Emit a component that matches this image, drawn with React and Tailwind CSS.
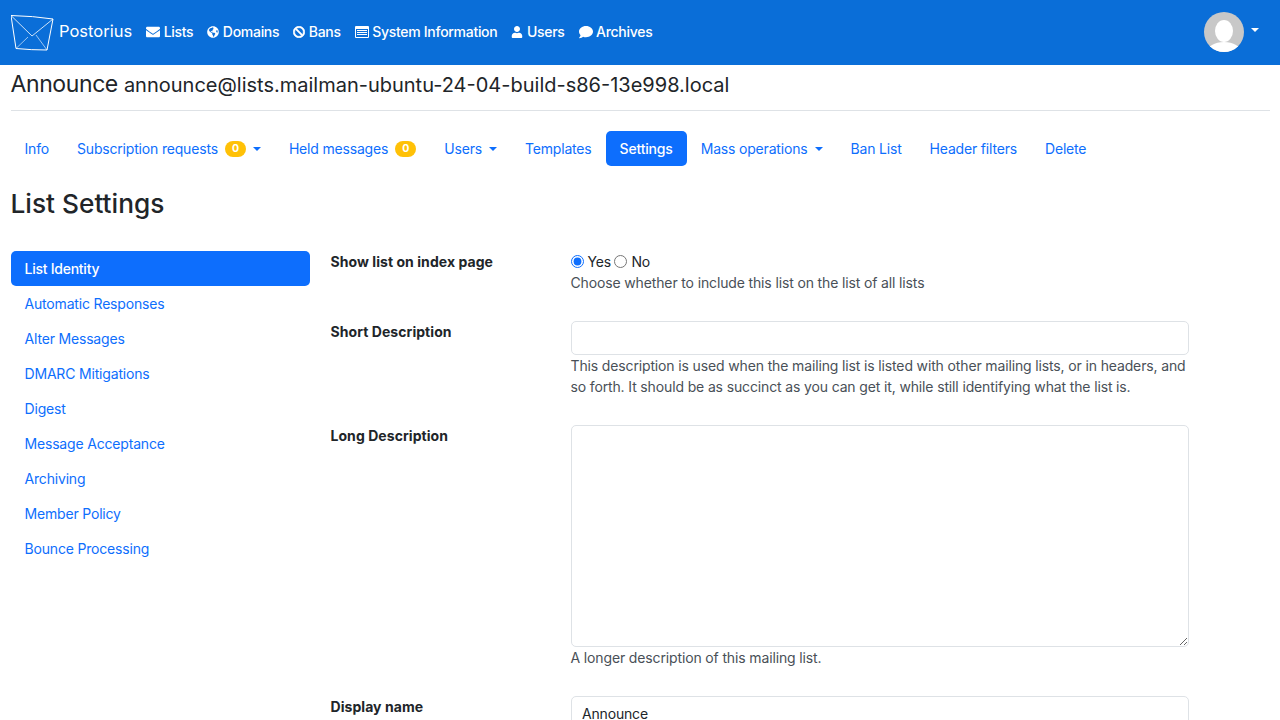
import React from 'react';
import { FaEnvelope, FaGlobeAmericas, FaBan, FaUser, FaComment } from 'react-icons/fa';

// font awesome 4 style list-alt, the package only has the newer outline one
const ListAlt = () => (
  <svg width="14" height="12" viewBox="0 0 14 12" fill="white" className="shrink-0">
    <path
      fillRule="evenodd"
      d="M1 0h12a1 1 0 0 1 1 1v10a1 1 0 0 1-1 1H1a1 1 0 0 1-1-1V1a1 1 0 0 1 1-1zM1 3v8h12V3zM2 4h10v1H2zM2 6h10v1H2zM2 8h10v1H2z"
    />
  </svg>
);

const navLinks = [
  { label: 'Lists', icon: <FaEnvelope size={14} /> },
  { label: 'Domains', icon: <FaGlobeAmericas size={12} /> },
  { label: 'Bans', icon: <FaBan size={12} stroke="white" strokeWidth={24} /> },
  { label: 'System Information', icon: <ListAlt /> },
  { label: 'Users', icon: <FaUser size={12} /> },
  { label: 'Archives', icon: <FaComment size={14} /> },
];

const tabs = [
  { label: 'Info' },
  { label: 'Subscription requests', badge: '0', caret: true },
  { label: 'Held messages', badge: '0' },
  { label: 'Users', caret: true },
  { label: 'Templates' },
  { label: 'Settings', active: true },
  { label: 'Mass operations', caret: true },
  { label: 'Ban List' },
  { label: 'Header filters' },
  { label: 'Delete' },
];

const sections = [
  'List Identity',
  'Automatic Responses',
  'Alter Messages',
  'DMARC Mitigations',
  'Digest',
  'Message Acceptance',
  'Archiving',
  'Member Policy',
  'Bounce Processing',
];

const Caret = ({ className }) => (
  <span className={`inline-block w-0 h-0 border-t-[4px] border-x-[4px] border-x-transparent ${className}`}></span>
);

const Logo = () => (
  <svg width="44" height="38" viewBox="0 0 44 38" fill="none" stroke="white" className="shrink-0">
    <path d="M0 1.5 Q22 2 42 5 L36 36 Q20 36 5 34.5 Z" strokeWidth="1" />
    <path d="M0 1.5 L21 22 L42 5" strokeWidth="0.8" />
    <path d="M5 34.5 L17 23 M36 36 L25 21" strokeWidth="0.6" />
  </svg>
);

const Avatar = () => (
  <svg width="40" height="40" viewBox="0 0 40 40">
    <clipPath id="avatar-clip"><circle cx="20" cy="20" r="20" /></clipPath>
    <g clipPath="url(#avatar-clip)">
      <rect width="40" height="40" fill="#c8c8c8" />
      <ellipse cx="20" cy="19" rx="9" ry="11" fill="white" />
      <ellipse cx="20" cy="40" rx="17" ry="10" fill="white" />
    </g>
  </svg>
);

const Field = ({ label, children }) => (
  <div className="flex mb-[28px]">
    <label className="w-[240px] shrink-0 font-bold tracking-[0.06px]">{label}</label>
    <div className="w-[618.5px]">{children}</div>
  </div>
);

const Help = ({ children }) => <div className="text-[#495057] tracking-[-0.14px]">{children}</div>;

export default function App() {
  return (
    <div className="h-[720px] overflow-hidden bg-white text-[14px] leading-[21px] tracking-[-0.18px] text-[#212529] font-['Inter',sans-serif]">
      {/* Top navbar */}
      <nav className="h-[65px] bg-[#0a6ed8] flex items-center pl-[11px] pr-[21px] text-white">
        <Logo />
        <span className="ml-[4px] text-[16.5px] -mt-[2px] tracking-normal">Postorius</span>
        <div className="flex items-center ml-[14px] gap-[14px] font-medium tracking-[-0.29px] -mt-[2px]">
          {navLinks.map(({ label, icon }) => (
            <a key={label} className="flex items-center gap-[3.5px]">
              {icon}
              {label}
            </a>
          ))}
        </div>
        <div className="ml-auto flex items-center gap-[7px] -mt-[1px]">
          <Avatar />
          <Caret className="border-t-white -mt-[4px]" />
        </div>
      </nav>

      <div className="px-[10.5px]">
        <div className="border-b border-[#dee2e6] h-[46px] flex items-baseline pt-[1px]">
          <span className="text-[23px] leading-[36px] tracking-[-0.4px]">Announce</span>
          <span className="text-[20px] ml-[6px] tracking-normal">announce@lists.mailman-ubuntu-24-04-build-s86-13e998.local</span>
        </div>

        {/* List tabs */}
        <div className="flex mt-[20px] text-[#0d6efd]">
          {tabs.map((tab) => (
            <a
              key={tab.label}
              className={`h-[35px] px-[14px] flex items-center rounded-[5px] ${tab.active ? 'bg-[#0d6efd] text-white font-medium' : ''}`}
            >
              {tab.label}
              {tab.badge && (
                <span className="ml-[7px] w-[21px] h-[16px] rounded-full bg-[#ffc107] text-white text-[10.5px] font-bold flex items-center justify-center">
                  {tab.badge}
                </span>
              )}
              {tab.caret && <Caret className="border-t-[#0d6efd] ml-[7px]" />}
            </a>
          ))}
        </div>

        <h2 className="text-[26.25px] leading-[32px] tracking-normal font-medium mt-[22px] mb-[31px]">List Settings</h2>

        <div className="flex">
          {/* Section nav */}
          <div className="w-[299px] shrink-0 text-[#0d6efd]">
            {sections.map((name, i) => (
              <a
                key={name}
                className={`block h-[35px] px-[14px] leading-[35px] rounded-[5px] ${i === 0 ? 'bg-[#0d6efd] text-white font-medium tracking-[-0.25px]' : ''}`}
              >
                {name}
              </a>
            ))}
          </div>

          {/* Form */}
          <div className="ml-[21px] flex-1">
            <Field label="Show list on index page">
              <div className="flex items-center h-[21px]">
                <input type="radio" name="show" defaultChecked className="w-[13px] h-[13px] accent-[#0d6efd]" />
                <span className="ml-[4px]">Yes</span>
                <input type="radio" name="show" className="w-[13px] h-[13px] ml-[3.5px]" />
                <span className="ml-[4px]">No</span>
              </div>
              <Help>Choose whether to include this list on the list of all lists</Help>
            </Field>
            <Field label="Short Description">
              <input type="text" className="block w-full h-[34px] border border-[#dee2e6] rounded-[5px] px-[10.5px]" />
              <Help>
                This description is used when the mailing list is listed with other mailing lists, or in headers, and so forth. It should be as succinct as you can get it, while still identifying what the list is.
              </Help>
            </Field>
            <Field label="Long Description">
              <textarea className="block w-full h-[222px] border border-[#dee2e6] rounded-[5px] px-[10.5px] py-[6px]"></textarea>
              <Help>A longer description of this mailing list.</Help>
            </Field>
            <Field label="Display name">
              <input type="text" defaultValue="Announce" className="block w-full h-[34px] border border-[#dee2e6] rounded-[5px] px-[10.5px]" />
            </Field>
          </div>
        </div>
      </div>
    </div>
  );
}
